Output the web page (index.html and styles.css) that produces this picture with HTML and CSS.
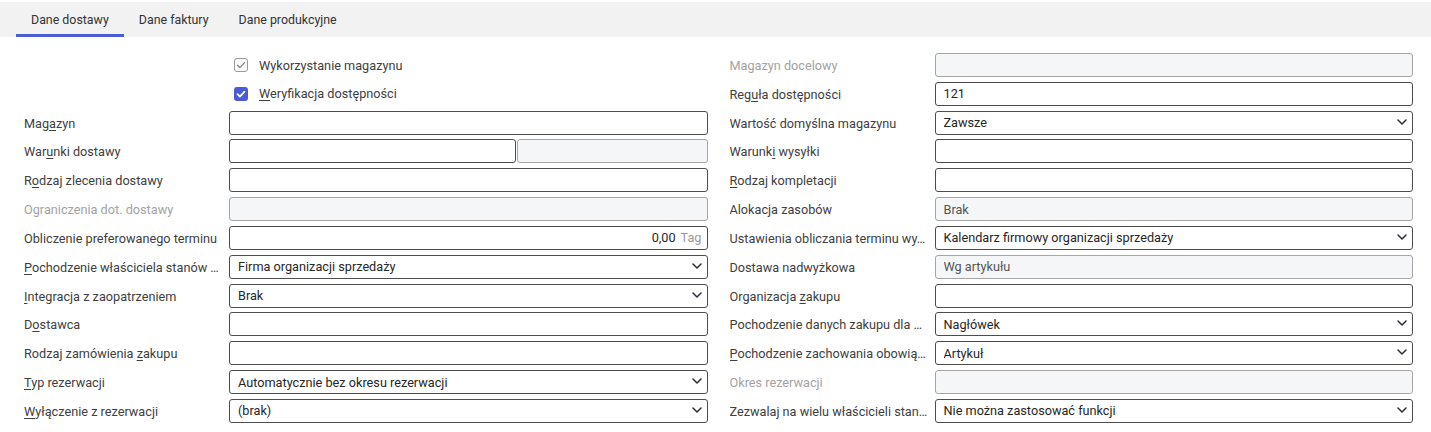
FILE: index.html
```html
<!DOCTYPE html>
<html lang="pl">
<head>
<meta charset="utf-8">
<title>Dane dostawy</title>
<link rel="stylesheet" href="styles.css">
</head>
<body>
<nav class="tabs">
  <div class="tab active">Dane dostawy</div>
  <div class="tab">Dane faktury</div>
  <div class="tab">Dane produkcyjne</div>
</nav>
<main class="form">
  <section class="col">
    <div class="label"></div>
    <div class="check-field">
      <span class="cb cb-disabled"><svg viewBox="0 0 14 14" width="14" height="14"><path d="M3.5 7.2l2.4 2.4 4.6-5" fill="none" stroke="#8a8a8a" stroke-width="1.4" stroke-linecap="round" stroke-linejoin="round"/></svg></span>
      <span class="cb-text">Wykorzystanie magazynu</span>
    </div>

    <div class="label"></div>
    <div class="check-field">
      <span class="cb cb-on"><svg viewBox="0 0 14 14" width="14" height="14"><path d="M3.5 7.2l2.4 2.4 4.6-5" fill="none" stroke="#fff" stroke-width="1.8" stroke-linecap="round" stroke-linejoin="round"/></svg></span>
      <span class="cb-text"><u>W</u>eryfikacja dostępności</span>
    </div>

    <div class="label">Mag<u>a</u>zyn</div>
    <div class="field"></div>

    <div class="label">War<u>u</u>nki dostawy</div>
    <div class="split">
      <div class="field"></div>
      <div class="field disabled"></div>
    </div>

    <div class="label">R<u>o</u>dzaj zlecenia dostawy</div>
    <div class="field"></div>

    <div class="label muted">Ograniczenia dot. dostawy</div>
    <div class="field disabled"></div>

    <div class="label">Obliczenie preferowanego terminu</div>
    <div class="field number"><span class="num">0,00</span><span class="unit">Tag</span></div>

    <div class="label"><u>P</u>ochodzenie właściciela stanów …</div>
    <div class="field select"><span class="val">Firma organizacji sprzedaży</span><svg class="chev" viewBox="0 0 10 6" width="10" height="6"><path d="M1 1l4 4 4-4" fill="none" stroke="#2b2b3a" stroke-width="1.5" stroke-linecap="round" stroke-linejoin="round"/></svg></div>

    <div class="label"><u>I</u>ntegracja z zaopatrzeniem</div>
    <div class="field select"><span class="val">Brak</span><svg class="chev" viewBox="0 0 10 6" width="10" height="6"><path d="M1 1l4 4 4-4" fill="none" stroke="#2b2b3a" stroke-width="1.5" stroke-linecap="round" stroke-linejoin="round"/></svg></div>

    <div class="label">D<u>o</u>stawca</div>
    <div class="field"></div>

    <div class="label">Rodzaj zamówienia <u>z</u>akupu</div>
    <div class="field"></div>

    <div class="label"><u>T</u>yp rezerwacji</div>
    <div class="field select"><span class="val">Automatycznie bez okresu rezerwacji</span><svg class="chev" viewBox="0 0 10 6" width="10" height="6"><path d="M1 1l4 4 4-4" fill="none" stroke="#2b2b3a" stroke-width="1.5" stroke-linecap="round" stroke-linejoin="round"/></svg></div>

    <div class="label"><u>W</u>yłączenie z rezerwacji</div>
    <div class="field select"><span class="val">(brak)</span><svg class="chev" viewBox="0 0 10 6" width="10" height="6"><path d="M1 1l4 4 4-4" fill="none" stroke="#2b2b3a" stroke-width="1.5" stroke-linecap="round" stroke-linejoin="round"/></svg></div>
  </section>

  <section class="col">
    <div class="label muted">Magazyn docelowy</div>
    <div class="field disabled"></div>

    <div class="label">Reg<u>u</u>ła dostępności</div>
    <div class="field"><span class="val">121</span></div>

    <div class="label">Wartość domyślna magazynu</div>
    <div class="field select"><span class="val">Zawsze</span><svg class="chev" viewBox="0 0 10 6" width="10" height="6"><path d="M1 1l4 4 4-4" fill="none" stroke="#2b2b3a" stroke-width="1.5" stroke-linecap="round" stroke-linejoin="round"/></svg></div>

    <div class="label">Warunk<u>i</u> wysyłki</div>
    <div class="field"></div>

    <div class="label"><u>R</u>odzaj kompletacji</div>
    <div class="field"></div>

    <div class="label">Alokacja zasobów</div>
    <div class="field disabled"><span class="val">Brak</span></div>

    <div class="label">Ustawienia obliczania terminu wy…</div>
    <div class="field select"><span class="val">Kalendarz firmowy organizacji sprzedaży</span><svg class="chev" viewBox="0 0 10 6" width="10" height="6"><path d="M1 1l4 4 4-4" fill="none" stroke="#2b2b3a" stroke-width="1.5" stroke-linecap="round" stroke-linejoin="round"/></svg></div>

    <div class="label">Dostawa nadwyżkowa</div>
    <div class="field disabled"><span class="val">Wg artykułu</span></div>

    <div class="label">Organizacja <u>z</u>akupu</div>
    <div class="field"></div>

    <div class="label">Pochodzenie danych zakupu dla …</div>
    <div class="field select"><span class="val">Nagłówek</span><svg class="chev" viewBox="0 0 10 6" width="10" height="6"><path d="M1 1l4 4 4-4" fill="none" stroke="#2b2b3a" stroke-width="1.5" stroke-linecap="round" stroke-linejoin="round"/></svg></div>

    <div class="label"><u>P</u>ochodzenie zachowania obowią…</div>
    <div class="field select"><span class="val">Artykuł</span><svg class="chev" viewBox="0 0 10 6" width="10" height="6"><path d="M1 1l4 4 4-4" fill="none" stroke="#2b2b3a" stroke-width="1.5" stroke-linecap="round" stroke-linejoin="round"/></svg></div>

    <div class="label muted">Okres rezerwacji</div>
    <div class="field disabled"></div>

    <div class="label">Zezwalaj na wielu właścicieli stan…</div>
    <div class="field select"><span class="val">Nie można zastosować funkcji</span><svg class="chev" viewBox="0 0 10 6" width="10" height="6"><path d="M1 1l4 4 4-4" fill="none" stroke="#2b2b3a" stroke-width="1.5" stroke-linecap="round" stroke-linejoin="round"/></svg></div>
  </section>
</main>
</body>
</html>
```

FILE: styles.css
```css
* { box-sizing: border-box; }

html, body {
  margin: 0;
  padding: 0;
  background: #ffffff;
}

body {
  font-family: Roboto, "Liberation Sans", Arial, sans-serif;
  font-size: 12.7px;
  color: #404040;
}

u {
  text-decoration: underline;
  text-underline-offset: 2px;
  text-decoration-thickness: 1px;
}

.tabs {
  margin-top: 2px;
  height: 35px;
  background: #f2f2f2;
  display: flex;
  padding-left: 16px;
}

.tab {
  height: 35px;
  padding: 3px 15px 0;
  border-bottom: 3px solid transparent;
  display: flex;
  align-items: center;
  font-size: 12.4px;
  color: #333;
  white-space: nowrap;
}

.tab.active {
  border-bottom-color: #4a5bd8;
}

.form {
  display: grid;
  grid-template-columns: 1fr 1fr;
  column-gap: 22px;
  padding: 16px 18px 0 24px;
}

.col {
  display: grid;
  grid-template-columns: 205px minmax(0, 1fr);
  grid-auto-rows: 24px;
  row-gap: 4.83px;
}

.label {
  display: block;
  line-height: 25px;
  padding-right: 4px;
  white-space: nowrap;
  overflow: hidden;
  text-overflow: ellipsis;
  color: #404040;
}

.label.muted {
  color: #a3a3a3;
}

.field {
  display: flex;
  align-items: center;
  height: 24px;
  border: 1px solid #4d4d4d;
  border-radius: 3px;
  background: #fff;
  padding: 0 8px;
  color: #262626;
  min-width: 0;
}

.field.disabled {
  background: #f5f6f8;
  border-color: #a6a6a6;
  color: #555;
}

.val {
  flex: 1;
  white-space: nowrap;
  overflow: hidden;
}

.field.select {
  padding-right: 5px;
}

.chev {
  flex: none;
  margin-left: 6px;
  margin-top: -2px;
}

.field.number {
  justify-content: flex-end;
  padding-right: 5px;
}

.num {
  color: #262626;
}

.unit {
  color: #9a9a9a;
  margin-left: 5px;
}

.split {
  display: grid;
  grid-template-columns: 287px minmax(0, 1fr);
  column-gap: 1px;
}

.check-field {
  display: flex;
  align-items: center;
  padding-left: 5px;
}

.cb {
  width: 14px;
  height: 14px;
  border-radius: 3px;
  display: flex;
  flex: none;
}

.cb-disabled {
  border: 1px solid #9a9a9a;
  background: #fafafa;
}

.cb-disabled svg {
  margin: -1px;
}

.cb-on {
  background: #4a5bd8;
}

.cb-text {
  margin-left: 11px;
  color: #404040;
}
```
